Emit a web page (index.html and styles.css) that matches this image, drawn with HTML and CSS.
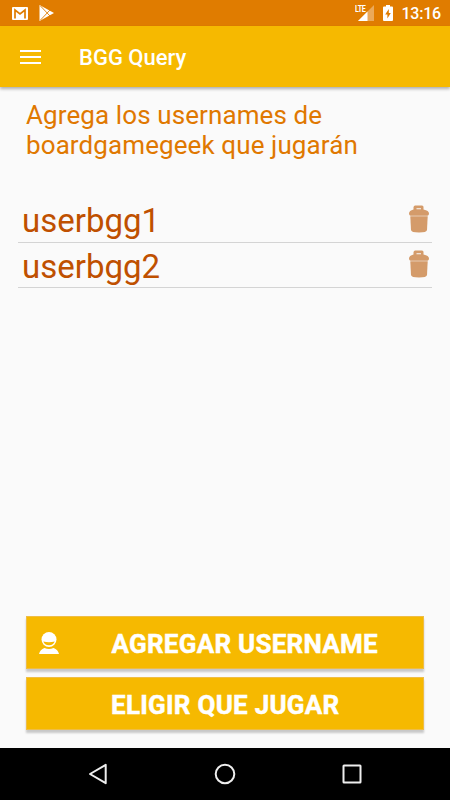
FILE: index.html
```html
<!DOCTYPE html>
<html lang="es">
<head>
  <meta charset="UTF-8">
  <title>BGG Query</title>
  <link rel="stylesheet" href="styles.css">
</head>
<body>

  <div class="status-bar">
    <svg class="mail" width="16" height="13" viewBox="0 0 16 13">
      <rect width="16" height="13" rx="1" fill="#fff"/>
      <path d="M3 11.500V3l5 4 5-4v8.500" fill="none" stroke="#e07c00" stroke-width="1.700"/>
    </svg>
    <svg class="play" width="15" height="16" viewBox="0 0 15 16">
      <path d="M.5 0 15 8 .5 16z" fill="#fff"/>
      <path d="M1.500 1 11 11M1.500 15 11 5" fill="none" stroke="#e07c00" stroke-width=".9"/>
    </svg>
    <div class="signal">
      <span class="lte">LTE</span>
      <svg width="16" height="16" viewBox="0 0 16 16">
        <path d="M16 0v16H0z" fill="#fff" opacity=".35"/>
        <path d="M9.500 6.500V16H0z" fill="#fff"/>
      </svg>
    </div>
    <svg class="battery" width="10" height="16" viewBox="0 0 10 16">
      <path d="M3 0h4v1.500h2q1 0 1 1V15q0 1-1 1H1q-1 0-1-1V2.500q0-1 1-1h2z" fill="#fff"/>
      <path d="M5.800 4 2.200 9.500h2.200V13.500L7.800 8H5.800z" fill="#e07c00"/>
    </svg>
    <span class="clock">13:16</span>
  </div>

  <header>
    <div class="menu"><span></span><span></span><span></span></div>
    <h1>BGG Query</h1>
  </header>

  <main>
    <p class="intro">Agrega los usernames de<br>boardgamegeek que jugarán</p>

    <ul class="users">
      <li>
        <span>userbgg1</span>
        <svg class="trash" width="20" height="28" viewBox="0 0 20 28">
          <path d="M4.500 4.500V2Q5 .5 6 .5h7q1.500 0 1.500 1.500v2.500Q20 5.500 20 8.500q0 2-1.500 2.200H1.500Q0 10.500 0 8.500 0 5.500 4.500 4.500zM7.500 3.300v1h4.500v-1z" fill-rule="evenodd"/>
          <path d="M1.300 11.200h17.400L18 25q-.2 2.500-8 2.500T2 25z"/>
        </svg>
      </li>
      <li>
        <span>userbgg2</span>
        <svg class="trash" width="20" height="28" viewBox="0 0 20 28">
          <path d="M4.500 4.500V2Q5 .5 6 .5h7q1.500 0 1.500 1.500v2.500Q20 5.500 20 8.500q0 2-1.500 2.200H1.500Q0 10.500 0 8.500 0 5.500 4.500 4.500zM7.500 3.300v1h4.500v-1z" fill-rule="evenodd"/>
          <path d="M1.300 11.200h17.400L18 25q-.2 2.500-8 2.500T2 25z"/>
        </svg>
      </li>
    </ul>

    <div class="actions">
      <button class="add">
        <svg width="20" height="22" viewBox="0 0 20 22">
          <circle cx="10" cy="7.500" r="7.500" fill="#fff"/>
          <path d="M4.300 9.500Q10 10.800 15.700 9.500 14.500 13.200 10 13.200T4.300 9.500z" fill="#f6b900"/>
          <path d="M0 22q1-4.500 5.500-6 4.500 2 9 0 4.500 1.500 5.500 6z" fill="#fff"/>
        </svg>
        <span>AGREGAR USERNAME</span>
      </button>
      <button class="choose"><span>ELIGIR QUE JUGAR</span></button>
    </div>
  </main>

  <nav>
    <svg width="22" height="22" viewBox="0 0 22 22"><path d="M18.700 1.800v18.400L3 11z"/></svg>
    <svg width="22" height="22" viewBox="0 0 22 22"><circle cx="11" cy="11" r="9.300"/></svg>
    <svg width="22" height="22" viewBox="0 0 22 22"><rect x="2.500" y="2.500" width="17" height="17" rx=".5"/></svg>
  </nav>

</body>
</html>
```
FILE: styles.css
```css
* {
  box-sizing: border-box;
}

body {
  margin: 0;
  height: 800px;
  display: flex;
  flex-direction: column;
  background: #fafafa;
  font-family: Roboto, sans-serif;
  overflow: hidden;
}

.status-bar {
  height: 26px;
  flex: none;
  display: flex;
  align-items: center;
  padding: 0 9px 0 12px;
  background: #e07c00;
  color: #fff;
}

.play {
  margin-left: 11px;
}

.signal {
  position: relative;
  width: 19px;
  height: 16px;
  margin-left: auto;
  text-align: right;
  line-height: 0;
}

.lte {
  position: absolute;
  left: 0;
  top: 0;
  font-size: 9px;
  font-weight: 700;
  line-height: 8px;
  letter-spacing: -0.5px;
  transform: scaleX(0.8);
  transform-origin: left;
}

.battery {
  margin: 0 8px 0 9px;
}

.clock {
  font-size: 16px;
  font-weight: 500;
  line-height: 26px;
  padding-top: 2px;
  letter-spacing: -0.2px;
}

header {
  position: relative;
  height: 61px;
  flex: none;
  display: flex;
  align-items: center;
  padding-left: 20px;
  background: #f6b900;
  box-shadow: 0 2px 3px rgba(0,0,0,0.3);
}

.menu {
  display: flex;
  flex-direction: column;
  gap: 4px;
  width: 21px;
}

.menu span {
  height: 2px;
  background: #fff;
}

h1 {
  margin: 2px 0 0 38px;
  color: #fff;
  font-size: 22px;
  font-weight: 500;
}

main {
  flex: 1;
  display: flex;
  flex-direction: column;
  padding: 13px 18px 0;
}

.intro {
  margin: 0 0 0 8px;
  color: #e07800;
  font-size: 26px;
  line-height: 30px;
  letter-spacing: 0.1px;
}

.users {
  list-style: none;
  margin: 37px 0 0;
  padding: 0;
}

.users li {
  display: flex;
  justify-content: space-between;
  align-items: center;
  height: 45.500px;
  padding: 2px 4px 0 4px;
  border-bottom: 1px solid #d4d4d4;
  color: #bf5000;
  font-size: 33px;
}

.users li + li span {
  padding-top: 1px;
}

.trash {
  fill: #d49b6a;
  margin: 0 -0.500px 3px 0;
}

.actions {
  margin: auto 8px 18px;
  display: flex;
  flex-direction: column;
  gap: 8px;
}

button {
  width: 100%;
  height: 53px;
  display: flex;
  align-items: center;
  border: 1px solid #efbd45;
  padding: 2px 0 0 84px;
  background: #f6b900;
  box-shadow: 0 3px 2px rgba(0,0,0,0.2);
  color: #fff;
  font-family: Roboto, sans-serif;
  font-size: 26px;
  font-weight: 700;
  letter-spacing: 0.25px;
  white-space: nowrap;
  -webkit-text-stroke: 0.5px #fff;
}

.add {
  padding-left: 11px;
}

.add svg {
  margin: 0 0 1px 0.500px;
}

.add span {
  margin-left: 53px;
}

nav {
  height: 52px;
  flex: none;
  display: flex;
  justify-content: center;
  gap: 105px;
  padding-top: 15px;
  background: #000;
}

nav svg {
  fill: none;
  stroke: #eee;
  stroke-width: 2;
  stroke-linejoin: round;
}
```
